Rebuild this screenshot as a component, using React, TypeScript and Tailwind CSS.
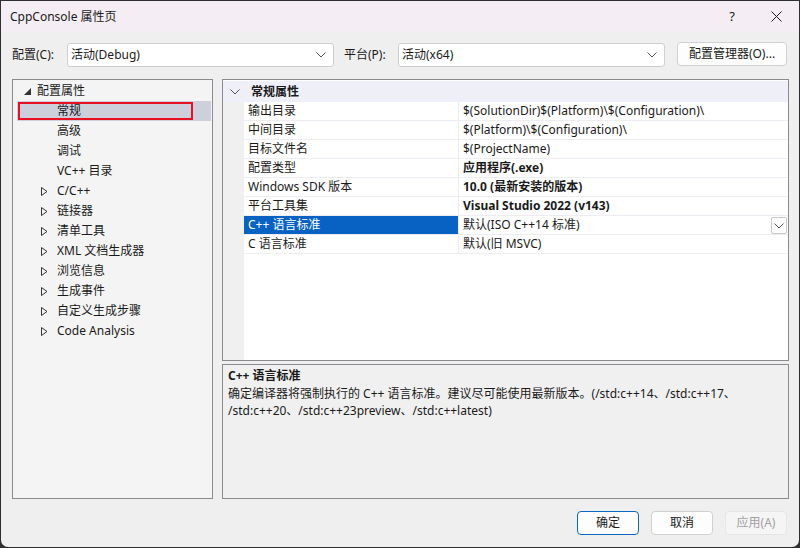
import React from "react";

const font = { fontFamily: '"Noto Sans", "Noto Sans CJK SC", sans-serif' };

function Chevron({ className = "" }: { className?: string }) {
  return (
    <svg width="10" height="6" viewBox="0 0 10 6" className={className}>
      <path d="M0.5 0.5 L5 5 L9.5 0.5" fill="none" stroke="#555" strokeWidth="1" />
    </svg>
  );
}

function Combo({ text, w }: { text: string; w: string }) {
  return (
    <div className={`${w} h-[24px] bg-white border border-[#cfcfcf] rounded-[3px] flex items-center pl-[3px] pr-[7px] justify-between`}>
      <span className="text-[12px] text-[#1a1a1a] leading-none">{text}</span>
      <Chevron />
    </div>
  );
}

const treeChildren = ["常规", "高级", "调试", "VC++ 目录"];
const treeGroups = ["C/C++", "链接器", "清单工具", "XML 文档生成器", "浏览信息", "生成事件", "自定义生成步骤", "Code Analysis"];

function Expander() {
  return (
    <svg width="7" height="9" viewBox="0 0 7 9" className="shrink-0">
      <path d="M0.5 0.5 L6 4.5 L0.5 8.5 Z" fill="none" stroke="#333" strokeWidth="1" />
    </svg>
  );
}

const props: [string, string, boolean][] = [
  ["输出目录", "$(SolutionDir)$(Platform)\\$(Configuration)\\", false],
  ["中间目录", "$(Platform)\\$(Configuration)\\", false],
  ["目标文件名", "$(ProjectName)", false],
  ["配置类型", "应用程序(.exe)", true],
  ["Windows SDK 版本", "10.0 (最新安装的版本)", true],
  ["平台工具集", "Visual Studio 2022 (v143)", true],
  ["C++ 语言标准", "默认(ISO C++14 标准)", false],
  ["C 语言标准", "默认(旧 MSVC)", false],
];

export default function App() {
  return (
    <div className="w-[800px] h-[548px] bg-[#2e2e2e] p-px" style={font}>
      <div className="w-full h-full bg-[#efefef] rounded-bl-[7px] rounded-br-[7px] flex flex-col overflow-hidden">
        {/* title bar */}
        <div className="h-[31px] bg-[#f4eef4] flex items-center shrink-0">
          <span className="ml-[9px] text-[12px] text-[#1a1a1a] leading-none">CppConsole 属性页</span>
          <div className="flex-1" />
          <span className="text-[13px] text-[#1a1a1a] mr-[36px] leading-none">?</span>
          <svg width="11" height="11" viewBox="0 0 11 11" className="mr-[17px]">
            <path d="M0.5 0.5 L10.5 10.5 M10.5 0.5 L0.5 10.5" stroke="#1a1a1a" strokeWidth="1" />
          </svg>
        </div>
        {/* toolbar */}
        <div className="flex items-center mt-[11px] h-[24px] shrink-0">
          <span className="ml-[11px] w-[55px] text-[12px] text-[#1a1a1a] leading-none">配置(C):</span>
          <Combo text="活动(Debug)" w="w-[267px]" />
          <span className="ml-[10px] w-[54px] text-[12px] text-[#1a1a1a] leading-none">平台(P):</span>
          <Combo text="活动(x64)" w="w-[267px]" />
          <div className="ml-[12px] w-[110px] h-[24px] -mt-[2px] bg-[#fdfdfd] border border-[#d0d0d0] rounded-[4px] flex items-center justify-center text-[12px] text-[#1a1a1a] leading-none">
            配置管理器(O)...
          </div>
        </div>
        {/* panels */}
        <div className="flex mt-[12px] ml-[11px] h-[420px] shrink-0">
          {/* tree */}
          <div className="w-[201px] h-full border border-[#8b8b8f] bg-[#f4f4f4] pt-[1px] pl-[4px] pr-[1px]">
            <div className="h-[20px] flex items-center text-[12px] text-[#1a1a1a] leading-none">
              <svg width="7" height="7" viewBox="0 0 7 7" className="ml-[7px] mr-[6px]">
                <path d="M7 0 L7 7 L0 7 Z" fill="#333" />
              </svg>
              配置属性
            </div>
            {treeChildren.map((t, i) => (
              <div
                key={t}
                className={`h-[20px] flex items-center text-[12px] text-[#1a1a1a] leading-none relative ${i === 0 ? "bg-[#cdd0db]" : ""}`}
              >
                <span className="ml-[40px]">{t}</span>
                {i === 0 && (
                  <div className="absolute left-[1px] top-[1px] w-[175px] h-[18px] border-2 border-[#e81123]" />
                )}
              </div>
            ))}
            {treeGroups.map((t) => (
              <div key={t} className="h-[20px] flex items-center text-[12px] text-[#1a1a1a] leading-none">
                <span className="ml-[24px] mr-[9px] flex"><Expander /></span>
                {t}
              </div>
            ))}
          </div>
          <div className="ml-[9px] w-[567px] h-full flex flex-col">
            {/* grid */}
            <div className="h-[282px] border border-[#8b8b8f] bg-white flex flex-col shrink-0 pt-[1px]">
              <div className="h-[21px] bg-[#eeeff7] flex items-center text-[12px] font-bold text-[#1a1a1a] leading-none shrink-0">
                <Chevron className="ml-[7px] mr-[11px]" />
                常规属性
              </div>
              <div className="flex flex-1">
                <div className="w-[21px] bg-[#f0f0f0]" />
                <div className="flex-1 flex flex-col">
                  {props.map(([n, v, b], i) => {
                    const sel = i === 6;
                    return (
                      <div key={n} className="h-[19px] flex border-b border-[#ececf2] text-[12px] leading-none">
                        <div className={`w-[214px] flex items-center pl-[4px] ${sel ? "bg-[#0862c3] text-white" : "text-[#1a1a1a]"}`}>{n}</div>
                        <div className="flex-1 flex items-center pl-[4px] border-l border-[#ececf2] text-[#1a1a1a] relative">
                          <span className={b ? "font-bold" : ""}>{v}</span>
                          {sel && (
                            <div className="absolute right-[1px] top-[1px] w-[16px] h-[17px] border border-[#c8c8c8] rounded-[2px] bg-white flex items-center justify-center">
                              <Chevron />
                            </div>
                          )}
                        </div>
                      </div>
                    );
                  })}
                </div>
              </div>
            </div>
            {/* description */}
            <div className="mt-[3px] flex-1 border border-[#8b8b8f] bg-[#f0f0f0] pl-[5px] pt-[2px] text-[12px] text-[#1a1a1a]">
              <div className="font-bold leading-[18px]">C++ 语言标准</div>
              <div className="leading-[17px]">
                确定编译器将强制执行的 C++ 语言标准。建议尽可能使用最新版本。(/std:c++14、/std:c++17、
                <br />
                /std:c++20、/std:c++23preview、/std:c++latest)
              </div>
            </div>
          </div>
        </div>
        {/* buttons */}
        <div className="flex justify-end mt-[12px] mr-[12px] gap-[12px] shrink-0">
          <div className="w-[62px] h-[24px] bg-[#fdfdfd] border border-[#0a67c2] rounded-[4px] flex items-center justify-center text-[12px] text-[#1a1a1a] leading-none">确定</div>
          <div className="w-[62px] h-[24px] bg-[#fdfdfd] border border-[#d0d0d0] rounded-[4px] flex items-center justify-center text-[12px] text-[#1a1a1a] leading-none">取消</div>
          <div className="w-[62px] h-[24px] bg-[#f5f5f5] border border-[#e5e5e5] rounded-[4px] flex items-center justify-center text-[12px] text-[#a0a0a0] leading-none">应用(A)</div>
        </div>
      </div>
    </div>
  );
}
